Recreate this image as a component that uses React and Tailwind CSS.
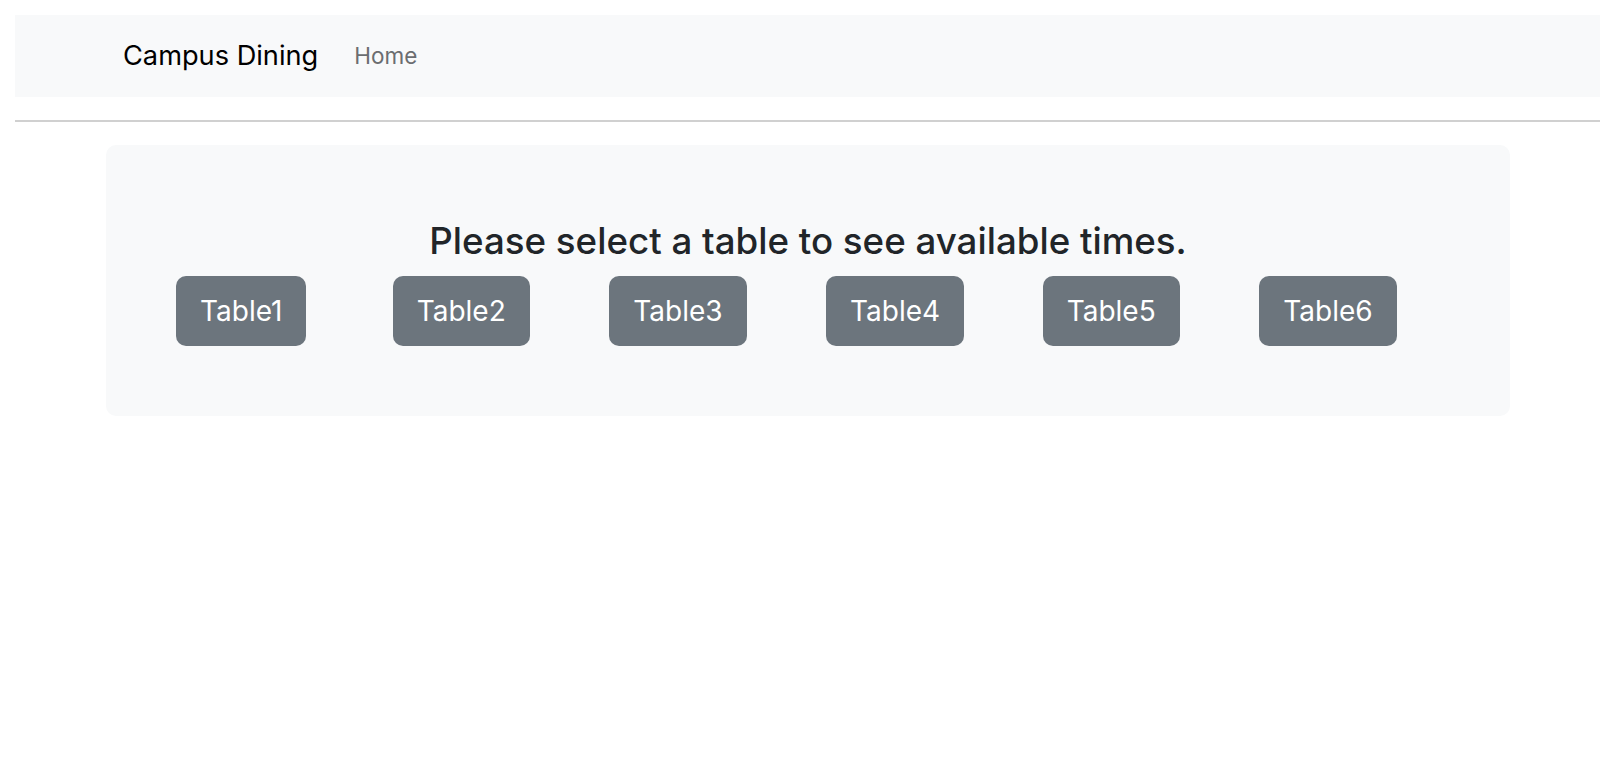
export default function App() {
  const tables = ["Table1", "Table2", "Table3", "Table4", "Table5", "Table6"];
  return (
    <div className="min-h-[760px] w-[1600px] overflow-hidden bg-white font-['Inter',sans-serif]">
      <nav className="ml-[15px] mt-[15px] flex h-[82px] items-center bg-[#f8f9fa] pl-[108px]">
        <span className="text-[27.2px] leading-none text-black">Campus Dining</span>
        <span className="ml-[36px] text-[22.5px] leading-none text-[#6b6d70]">Home</span>
      </nav>
      <div className="ml-[15px] mt-[23px] border-t-2 border-[#d0d0d0]" />
      <div className="ml-[106px] mt-[23px] w-[1404px] rounded-[10px] bg-[#f8f9fa] pb-[70px] pt-[73px]">
        <h3 className="text-center text-[36.7px] font-medium leading-[46px] text-[#212529]">
          Please select a table to see available times.
        </h3>
        <div className="ml-[70px] mt-[12px] grid w-[1300px] grid-cols-6">
          {tables.map((t) => (
            <div key={t}>
              <button className="h-[70px] rounded-[10px] bg-[#6c757d] px-[24px] text-[28px] leading-none text-white">
                {t}
              </button>
            </div>
          ))}
        </div>
      </div>
    </div>
  );
}
